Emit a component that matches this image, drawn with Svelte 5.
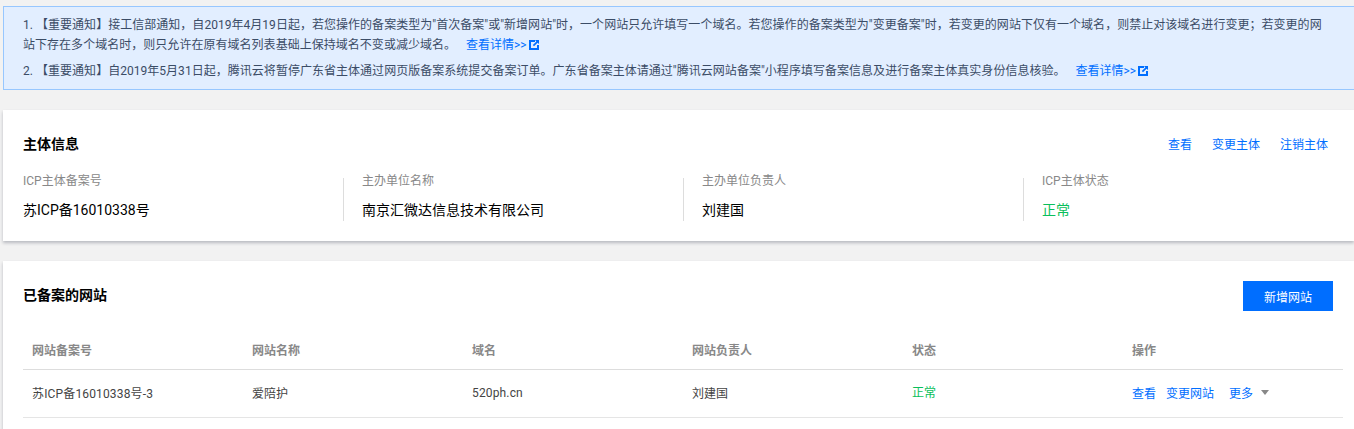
<script>
  const info = [
    { label: 'ICP主体备案号', value: '苏ICP备16010338号' },
    { label: '主办单位名称', value: '南京汇微达信息技术有限公司' },
    { label: '主办单位负责人', value: '刘建国' },
    { label: 'ICP主体状态', value: '正常', ok: true }
  ];
  const heads = ['网站备案号', '网站名称', '域名', '网站负责人', '状态', '操作'];
</script>

<div class="page">
  <section class="alert">
    <p class="n1">1. 【重要通知】接工信部通知，自2019年4月19日起，若您操作的备案类型为"首次备案"或"新增网站"时，一个网站只允许填写一个域名。若您操作的备案类型为"变更备案"时，若变更的网站下仅有一个域名，则禁止对该域名进行变更；若变更的网站下存在多个域名时，则只允许在原有域名列表基础上保持域名不变或减少域名。<a class="more">查看详情&gt;&gt;<svg viewBox="0 0 10 10" width="10" height="10"><path fill="#006eff" d="M0 0h6v2H2v6h6V5h2v5H0z"/><path fill="#006eff" d="M6 0h4v4L8.6 2.7 5 6.2 3.8 5l3.6-3.6z"/></svg></a></p>
    <p class="n2">2. 【重要通知】自2019年5月31日起，腾讯云将暂停广东省主体通过网页版备案系统提交备案订单。广东省备案主体请通过"腾讯云网站备案"小程序填写备案信息及进行备案主体真实身份信息核验。<a class="more">查看详情&gt;&gt;<svg viewBox="0 0 10 10" width="10" height="10"><path fill="#006eff" d="M0 0h6v2H2v6h6V5h2v5H0z"/><path fill="#006eff" d="M6 0h4v4L8.6 2.7 5 6.2 3.8 5l3.6-3.6z"/></svg></a></p>
  </section>

  <section class="card info-card">
    <header class="card-head">
      <h2>主体信息</h2>
      <nav class="links"><a>查看</a><a>变更主体</a><a>注销主体</a></nav>
    </header>
    <div class="info-grid">
      {#each info as item}
        <div class="info-item">
          <div class="label">{item.label}</div>
          <div class="value" class:ok={item.ok}>{item.value}</div>
        </div>
      {/each}
    </div>
  </section>

  <section class="card site-card">
    <header class="site-head">
      <h2>已备案的网站</h2>
      <button>新增网站</button>
    </header>
    <div class="row head">
      {#each heads as h}<div>{h}</div>{/each}
    </div>
    <div class="row body">
      <div class="num">苏ICP备16010338号-3</div>
      <div>爱陪护</div>
      <div class="num">520ph.cn</div>
      <div>刘建国</div>
      <div class="ok status">正常</div>
      <div class="ops"><a>查看</a><a>变更网站</a><a class="gap">更多</a><span class="caret"></span></div>
    </div>
  </section>
</div>

<style>
  :global(body) {
    margin: 0;
    background: #f2f2f2;
    overflow: hidden;
  }
  .page {
    width: 1354px;
    height: 429px;
    overflow: hidden;
    padding: 6px 0 0 3px;
    box-sizing: border-box;
    font-family: Roboto, "Noto Sans CJK SC", sans-serif;
    font-size: 12px;
    color: #444;
  }
  a { color: #006eff; text-decoration: none; }
  h2 { margin: 0; font-size: 14px; line-height: 20px; font-weight: 700; color: #000; }

  .alert {
    height: 84px;
    box-sizing: border-box;
    background: #e2eeff;
    border: 1px solid #97c7ff;
    border-right: 0;
    padding: 8px 27px 0 19px;
    color: #3b4c66;
    line-height: 20px;
    letter-spacing: 0.03px;
  }
  .alert p { margin: 0; }
  .n1 { margin-bottom: 6px !important; }
  .more { margin-left: 10px; letter-spacing: 0; }
  .more svg { margin-left: 2px; vertical-align: -1px; }

  .card {
    background: #fff;
    box-shadow: 0 2px 3px rgba(54, 58, 80, 0.3);
    padding: 0 21px 0 20px;
  }
  .info-card { margin-top: 20px; height: 131px; box-sizing: border-box; padding-top: 24px; }
  .card-head { display: flex; justify-content: space-between; align-items: center; height: 20px; padding-right: 5px; }
  .links { display: flex; gap: 20px; margin-top: -2px; }
  .info-grid { display: grid; grid-template-columns: 320px repeat(3, 340px); margin-top: 17px; }
  .info-item { position: relative; height: 50px; }
  .info-item + .info-item { padding-left: 19px; }
  .info-item + .info-item::before {
    content: "";
    position: absolute;
    left: 0;
    top: 7px;
    bottom: 0;
    width: 1px;
    background: #ddd;
  }
  .label { color: #888; line-height: 20px; }
  .value { font-size: 14px; line-height: 20px; color: #000; margin-top: 9px; }
  .ok { color: #0abf5b !important; }

  .site-card { margin-top: 20px; height: 200px; padding-top: 20px; box-sizing: border-box; }
  .site-head { display: flex; justify-content: space-between; align-items: center; height: 30px; }
  .site-head h2 { margin-top: -2px; }
  button {
    width: 90px; height: 30px; border: 0; padding: 0;
    background: #006eff; color: #fff;
    font: inherit;
  }
  .row {
    display: grid;
    grid-template-columns: 220px 220px 220px 220px 220px 1fr;
    margin-right: -10px;
    padding-left: 9px;
    align-items: center;
    box-sizing: border-box;
  }
  .head { margin-top: 8px; height: 51px; padding-top: 10px; border-bottom: 1px solid #ddd; color: #888; font-weight: 700; }
  .body { height: 48px; padding-bottom: 2px; border-bottom: 1px solid #e5e5e5; color: #444; }
  .num { letter-spacing: 0.15px; }
  .status { margin-top: -2px; }
  .ops { display: flex; align-items: center; gap: 10px; }
  .gap { margin-left: 5px; }
  .caret {
    width: 0; height: 0; margin-left: -2px;
    border-left: 4px solid transparent;
    border-right: 4px solid transparent;
    border-top: 5px solid #888;
  }
</style>
